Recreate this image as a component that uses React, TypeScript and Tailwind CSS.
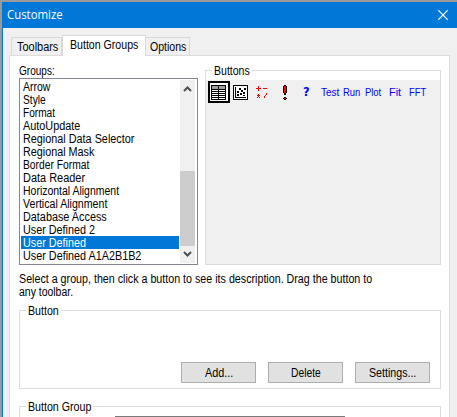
import { useLayoutEffect, useRef, useState } from "react";

const ui = "font-['Liberation_Sans',Arial,sans-serif] text-[12px] leading-[13px]";

// One line of text, condensed or widened to the width w.
function Fit({ w, text, className = "" }: { w: number; text: string; className?: string }) {
  const ref = useRef<HTMLSpanElement>(null);
  const [scale, setScale] = useState(1);
  useLayoutEffect(() => {
    if (ref.current) setScale(w / ref.current.offsetWidth);
  }, [w]);
  return (
    <span className={`block shrink-0 whitespace-nowrap ${className}`} style={{ width: w }}>
      <span ref={ref} className="inline-block origin-left" style={{ transform: `scaleX(${scale})` }}>
        {text}
      </span>
    </span>
  );
}

const groups: [string, number][] = [
  ["Arrow", 27],
  ["Style", 23],
  ["Format", 32],
  ["AutoUpdate", 57],
  ["Regional Data Selector", 111],
  ["Regional Mask", 71],
  ["Border Format", 66],
  ["Data Reader", 62],
  ["Horizontal Alignment", 96],
  ["Vertical Alignment", 84],
  ["Database Access", 84],
  ["User Defined 2", 72],
  ["User Defined", 63],
  ["User Defined A1A2B1B2", 118],
];

function Chevron({ up = false }: { up?: boolean }) {
  return (
    <svg width="15" height="17" viewBox="0 0 15 17" className="shrink-0">
      <path d={up ? "M4 11 L7.5 7.5 L11 11" : "M4 6 L7.5 9.5 L11 6"} fill="none" stroke="#505050" strokeWidth="2" />
    </svg>
  );
}

function PushButton({ text, w }: { text: string; w: number }) {
  return (
    <button className="flex h-[21px] w-[75px] justify-center border border-[#adadad] bg-[#e1e1e1] pt-[4px]">
      <Fit w={w} text={text} />
    </button>
  );
}

// Worksheet (selected), scatter plot, operators and exclamation mark.
function ToolIcons() {
  return (
    <svg width="80" height="24" viewBox="0 0 80 24" shapeRendering="crispEdges" className="shrink-0">
      <path d="M1 1h20v20h-20z" fill="#fff" stroke="#000" strokeWidth="2" />
      <path d="M3 4h15v15h-15z" fill="#000" />
      <path d="M4 5h6v3h-6z M11 5h6v3h-6z" fill="#a0a0a0" />
      <path
        d="M4 9h6v1h-6z M11 9h6v1h-6z M4 11h6v1h-6z M11 11h6v1h-6z M4 13h6v1h-6z M11 13h6v1h-6z M4 15h6v1h-6z M11 15h6v1h-6z M4 17h6v1h-6z M11 17h6v1h-6z"
        fill="#fff"
      />
      <path d="M25.5 4.5h14v14h-14z" fill="#fff" stroke="#000" />
      <path d="M27 6h1v10h10v1h-11z" fill="#000" />
      <path
        d="M31 7h2v2h-2z M36 7h2v2h-2z M33 9h2v2h-2z M29 10h2v2h-2z M35 11h2v2h-2z M32 12h2v2h-2z M29 13h2v2h-2z M35 14h2v1h-2z"
        fill="#000"
      />
      <path
        d="M50 5h1v2h2v1h-2v2h-1v-2h-2v-1h2z M55 7h4v1h-4z M50 13h1v1h1v1h-1v1h1v1h-1v-1h-1v1h-1v-1h1v-1h-1v-1h1z M58 12h1v2h-1z M57 14h1v1h-1z M56 15h1v2h-1z"
        fill="#f00"
      />
      <path d="M76 4h2v1h1v7h-1v2h-2v-2h-1v-7h1z M76 16h2v1h1v1h-1v1h-2v-1h-1v-1h1z" fill="#000" />
      <path d="M76 5h2v7h-2z M76 17h2v1h-2z" fill="#f00" />
    </svg>
  );
}

export default function App() {
  return (
    <div className={`flex h-[417px] w-[457px] flex-col overflow-hidden bg-[#999999] pt-[2px] pl-[2px] text-black ${ui}`}>
      <div className="flex h-[26px] shrink-0 items-start justify-between bg-[#0078d7] pl-[5px] text-white">
        <Fit w={56} text="Customize" className="pt-[5px] font-['Open_Sans','Noto_Sans',sans-serif] leading-[15px]" />
        <svg width="10" height="10" viewBox="0 0 10 10" className="mt-[8px] mr-[9px]">
          <path d="M0.3 0.3 L9.7 9.7 M9.7 0.3 L0.3 9.7" stroke="#fff" strokeWidth="1.2" />
        </svg>
      </div>
      <div className="flex h-[389px] flex-col border-l border-[#0078d7] bg-[#f0f0f0] pt-[7px] pl-[6px]">
        <div className="z-10 flex h-[21px] shrink-0 items-end pl-[2px]">
          <div className="mb-px h-[18px] w-[51px] border-x border-t border-[#d9d9d9] pt-[3px] pl-[5px]">
            <Fit w={41} text="Toolbars" />
          </div>
          <div className="h-[21px] w-[84px] border-x border-t border-[#d9d9d9] bg-white pt-[3px] pl-[7px]">
            <Fit w={68} text="Button Groups" />
          </div>
          <div className="mb-px h-[18px] w-[44px] border-t border-r border-[#d9d9d9] pt-[3px] pl-[4px]">
            <Fit w={36} text="Options" />
          </div>
        </div>
        <div className="-mt-px h-[362px] w-[441px] border border-b-0 border-[#dcdcdc] bg-white pt-[8px] pl-[9px]">
          <div className="flex h-[201px]">
            <div className="w-[179px]">
              <Fit w={36} text="Groups:" className="h-[14px] pt-px" />
              <div className="flex h-[187px] justify-between border border-[#828790] p-px pr-[2px]">
                <div className="w-[158px]">
                  {groups.map(([text, w]) => (
                    <div key={text} className={text === "User Defined" ? "h-[13px] bg-[#0078d7] pt-px pl-[2px] text-white" : "h-[13px] pt-px pl-[2px]"}>
                      <Fit w={w} text={text} />
                    </div>
                  ))}
                </div>
                <div className="flex h-[183px] w-[15px] flex-col bg-[#f0f0f0]">
                  <Chevron up />
                  <div className="mt-[74px] h-[75px] bg-[#cdcdcd]" />
                  <Chevron />
                </div>
              </div>
            </div>
            <div className="mt-[6px] ml-[7px] h-[195px] w-[236px] border border-[#dcdcdc]">
              <div className="-mt-[6px] ml-[6px] h-[15px] w-[40px] bg-white pl-[2px]">
                <Fit w={36} text="Buttons" />
              </div>
              <div className="flex h-[184px] bg-[#f0f0f0] pt-px pl-[2px]">
                <ToolIcons />
                <Fit w={7} text="?" className="mt-[3px] ml-[15px] font-['DejaVu_Sans',sans-serif] text-[13px] leading-[16px] font-bold text-[#0000ff]" />
                <div className="flex pt-[5px] text-[10px] leading-[13px] text-[#0000ff]">
                  <Fit w={18} text="Test" className="ml-[11px]" />
                  <Fit w={17} text="Run" className="ml-[4px]" />
                  <Fit w={16} text="Plot" className="ml-[5px]" />
                  <Fit w={12} text="Fit" className="ml-[8px]" />
                  <Fit w={17} text="FFT" className="ml-[8px]" />
                </div>
              </div>
            </div>
          </div>
          <div className="mt-[8px] h-[37px]">
            <Fit w={353} text="Select a group, then click a button to see its description. Drag the button to" />
            <Fit w={54} text="any toolbar." />
          </div>
          <div className="h-[79px] w-[422px] border border-[#dcdcdc]">
            <div className="-mt-[6px] ml-[6px] h-[15px] w-[35px] bg-white pl-[2px]">
              <Fit w={31} text="Button" />
            </div>
            <div className="mt-[42px] ml-[161px] flex gap-[12px]">
              <PushButton text="Add..." w={28} />
              <PushButton text="Delete" w={30} />
              <PushButton text="Settings..." w={47} />
            </div>
          </div>
          <div className="mt-[17px] h-[20px] w-[422px] border border-b-0 border-[#dcdcdc]">
            <div className="-mt-[6px] ml-[6px] h-[15px] w-[67px] bg-white pl-[2px]">
              <Fit w={63} text="Button Group" />
            </div>
            <div className="ml-[95px] h-px w-[230px] bg-[#7a7a7a]" />
          </div>
        </div>
      </div>
    </div>
  );
}
